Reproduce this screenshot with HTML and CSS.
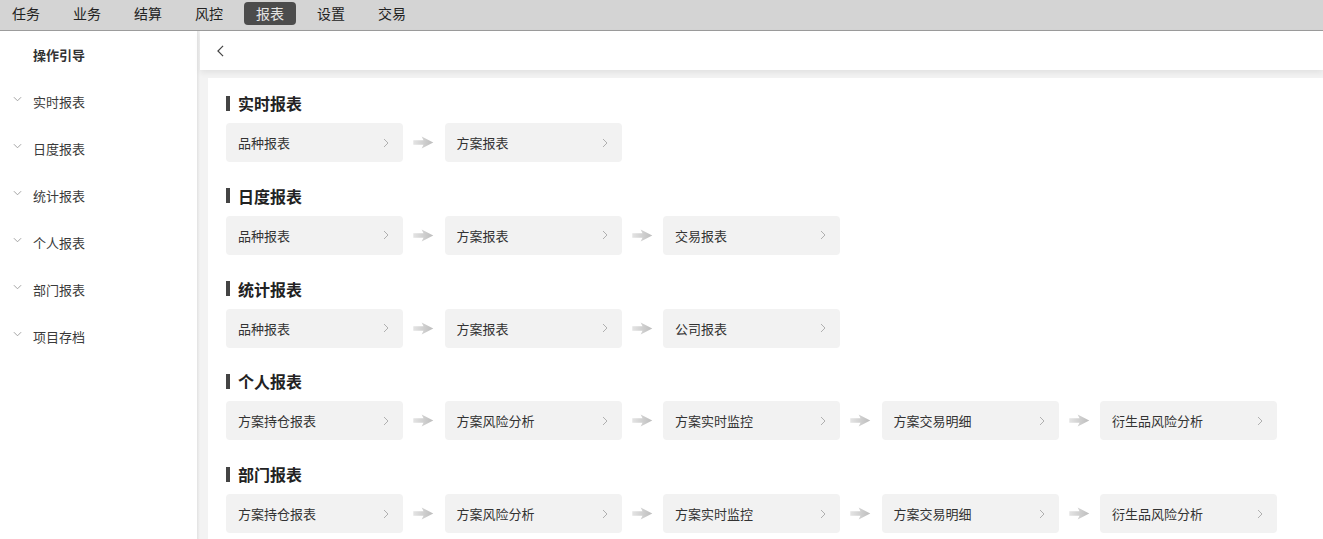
FILE: index.html
```html
<!DOCTYPE html>
<html lang="zh">
<head>
<meta charset="utf-8">
<title>报表</title>
<link rel="stylesheet" href="styles.css">
</head>
<body>
<svg width="0" height="0" class="defs" aria-hidden="true">
  <defs>
    <linearGradient id="ag" x1="0" y1="0" x2="1" y2="0">
      <stop offset="0" stop-color="#e4e4e4"/>
      <stop offset="1" stop-color="#bdbdbd"/>
    </linearGradient>
  </defs>
</svg>
<div class="topbar">
  <span class="nav-item">任务</span>
  <span class="nav-item">业务</span>
  <span class="nav-item">结算</span>
  <span class="nav-item">风控</span>
  <span class="nav-item active">报表</span>
  <span class="nav-item">设置</span>
  <span class="nav-item">交易</span>
</div>
<div class="layout">
  <aside class="sidebar">
    <div class="side-head">操作引导</div>
    <div class="side-item"><svg class="down" viewBox="0 0 10 6"><polyline points="1,1 5,5 9,1"/></svg><span>实时报表</span></div>
    <div class="side-item"><svg class="down" viewBox="0 0 10 6"><polyline points="1,1 5,5 9,1"/></svg><span>日度报表</span></div>
    <div class="side-item"><svg class="down" viewBox="0 0 10 6"><polyline points="1,1 5,5 9,1"/></svg><span>统计报表</span></div>
    <div class="side-item"><svg class="down" viewBox="0 0 10 6"><polyline points="1,1 5,5 9,1"/></svg><span>个人报表</span></div>
    <div class="side-item"><svg class="down" viewBox="0 0 10 6"><polyline points="1,1 5,5 9,1"/></svg><span>部门报表</span></div>
    <div class="side-item"><svg class="down" viewBox="0 0 10 6"><polyline points="1,1 5,5 9,1"/></svg><span>项目存档</span></div>
  </aside>
  <main class="main">
    <div class="header"><svg class="back" viewBox="0 0 8 14"><polyline points="7,1 1,7 7,13"/></svg></div>
    <div class="card">
      <section class="section">
        <h2 class="title">实时报表</h2>
        <div class="flow">
          <div class="box"><span>品种报表</span><svg class="chev" viewBox="0 0 6 10"><polyline points="1,1 5,5 1,9"/></svg></div>
          <svg class="arrow" viewBox="0 0 22 14"><path d="M0 4.5 H11 L9 0.5 L21.5 7 L9 13.5 L11 9.5 H0 Z"/></svg>
          <div class="box"><span>方案报表</span><svg class="chev" viewBox="0 0 6 10"><polyline points="1,1 5,5 1,9"/></svg></div>
        </div>
      </section>
      <section class="section">
        <h2 class="title">日度报表</h2>
        <div class="flow">
          <div class="box"><span>品种报表</span><svg class="chev" viewBox="0 0 6 10"><polyline points="1,1 5,5 1,9"/></svg></div>
          <svg class="arrow" viewBox="0 0 22 14"><path d="M0 4.5 H11 L9 0.5 L21.5 7 L9 13.5 L11 9.5 H0 Z"/></svg>
          <div class="box"><span>方案报表</span><svg class="chev" viewBox="0 0 6 10"><polyline points="1,1 5,5 1,9"/></svg></div>
          <svg class="arrow" viewBox="0 0 22 14"><path d="M0 4.5 H11 L9 0.5 L21.5 7 L9 13.5 L11 9.5 H0 Z"/></svg>
          <div class="box"><span>交易报表</span><svg class="chev" viewBox="0 0 6 10"><polyline points="1,1 5,5 1,9"/></svg></div>
        </div>
      </section>
      <section class="section">
        <h2 class="title">统计报表</h2>
        <div class="flow">
          <div class="box"><span>品种报表</span><svg class="chev" viewBox="0 0 6 10"><polyline points="1,1 5,5 1,9"/></svg></div>
          <svg class="arrow" viewBox="0 0 22 14"><path d="M0 4.5 H11 L9 0.5 L21.5 7 L9 13.5 L11 9.5 H0 Z"/></svg>
          <div class="box"><span>方案报表</span><svg class="chev" viewBox="0 0 6 10"><polyline points="1,1 5,5 1,9"/></svg></div>
          <svg class="arrow" viewBox="0 0 22 14"><path d="M0 4.5 H11 L9 0.5 L21.5 7 L9 13.5 L11 9.5 H0 Z"/></svg>
          <div class="box"><span>公司报表</span><svg class="chev" viewBox="0 0 6 10"><polyline points="1,1 5,5 1,9"/></svg></div>
        </div>
      </section>
      <section class="section">
        <h2 class="title">个人报表</h2>
        <div class="flow">
          <div class="box"><span>方案持仓报表</span><svg class="chev" viewBox="0 0 6 10"><polyline points="1,1 5,5 1,9"/></svg></div>
          <svg class="arrow" viewBox="0 0 22 14"><path d="M0 4.5 H11 L9 0.5 L21.5 7 L9 13.5 L11 9.5 H0 Z"/></svg>
          <div class="box"><span>方案风险分析</span><svg class="chev" viewBox="0 0 6 10"><polyline points="1,1 5,5 1,9"/></svg></div>
          <svg class="arrow" viewBox="0 0 22 14"><path d="M0 4.5 H11 L9 0.5 L21.5 7 L9 13.5 L11 9.5 H0 Z"/></svg>
          <div class="box"><span>方案实时监控</span><svg class="chev" viewBox="0 0 6 10"><polyline points="1,1 5,5 1,9"/></svg></div>
          <svg class="arrow" viewBox="0 0 22 14"><path d="M0 4.5 H11 L9 0.5 L21.5 7 L9 13.5 L11 9.5 H0 Z"/></svg>
          <div class="box"><span>方案交易明细</span><svg class="chev" viewBox="0 0 6 10"><polyline points="1,1 5,5 1,9"/></svg></div>
          <svg class="arrow" viewBox="0 0 22 14"><path d="M0 4.5 H11 L9 0.5 L21.5 7 L9 13.5 L11 9.5 H0 Z"/></svg>
          <div class="box"><span>衍生品风险分析</span><svg class="chev" viewBox="0 0 6 10"><polyline points="1,1 5,5 1,9"/></svg></div>
        </div>
      </section>
      <section class="section">
        <h2 class="title">部门报表</h2>
        <div class="flow">
          <div class="box"><span>方案持仓报表</span><svg class="chev" viewBox="0 0 6 10"><polyline points="1,1 5,5 1,9"/></svg></div>
          <svg class="arrow" viewBox="0 0 22 14"><path d="M0 4.5 H11 L9 0.5 L21.5 7 L9 13.5 L11 9.5 H0 Z"/></svg>
          <div class="box"><span>方案风险分析</span><svg class="chev" viewBox="0 0 6 10"><polyline points="1,1 5,5 1,9"/></svg></div>
          <svg class="arrow" viewBox="0 0 22 14"><path d="M0 4.5 H11 L9 0.5 L21.5 7 L9 13.5 L11 9.5 H0 Z"/></svg>
          <div class="box"><span>方案实时监控</span><svg class="chev" viewBox="0 0 6 10"><polyline points="1,1 5,5 1,9"/></svg></div>
          <svg class="arrow" viewBox="0 0 22 14"><path d="M0 4.5 H11 L9 0.5 L21.5 7 L9 13.5 L11 9.5 H0 Z"/></svg>
          <div class="box"><span>方案交易明细</span><svg class="chev" viewBox="0 0 6 10"><polyline points="1,1 5,5 1,9"/></svg></div>
          <svg class="arrow" viewBox="0 0 22 14"><path d="M0 4.5 H11 L9 0.5 L21.5 7 L9 13.5 L11 9.5 H0 Z"/></svg>
          <div class="box"><span>衍生品风险分析</span><svg class="chev" viewBox="0 0 6 10"><polyline points="1,1 5,5 1,9"/></svg></div>
        </div>
      </section>
    </div>
  </main>
</div>
</body>
</html>
```
FILE: styles.css
```css
* { box-sizing: border-box; }
html, body { margin: 0; height: 100%; }
body {
  font-family: "Noto Sans CJK SC", "Noto Sans", sans-serif;
  color: #333;
  background: #fff;
  overflow: hidden;
  width: 1323px;
  height: 539px;
}
.defs { position: absolute; width: 0; height: 0; }
.topbar {
  height: 31px;
  background: #d4d4d4;
  border-bottom: 1px solid #9c9c9c;
  display: flex;
  align-items: flex-start;
  gap: 9px;
  padding-top: 2px;
}
.nav-item {
  font-size: 14px;
  height: 23px;
  line-height: 23px;
  padding: 0 12px;
  color: #222;
  border-radius: 4px;
}
.nav-item.active {
  background: #4c4c4c;
  color: #e6e6e6;
}
.layout {
  display: flex;
  height: calc(100% - 31px);
}
.sidebar {
  width: 197px;
  flex: none;
  background: #fff;
}
.side-head {
  height: 47px;
  line-height: 47px;
  padding-left: 33px;
  font-size: 13px;
  font-weight: bold;
  color: #333;
}
.side-item {
  height: 47px;
  display: flex;
  align-items: center;
  padding-left: 13px;
  font-size: 13px;
  color: #3a3a3a;
}
.side-item .down {
  width: 9px;
  height: 6px;
  margin-right: 11px;
  margin-top: -5px;
  fill: none;
  stroke: #999;
  stroke-width: 1;
}
.main {
  flex: 1;
  background: linear-gradient(to right, #e2e2e2 0, #f3f3f3 3px, #f3f3f3 100%);
  padding-left: 3px;
  display: flex;
  flex-direction: column;
  min-height: 0;
}
.header {
  flex: none;
  height: 39px;
  background: #fff;
  display: flex;
  align-items: center;
  padding-left: 17px;
  box-shadow: 0 3px 6px rgba(0,0,0,0.07);
}
.back {
  width: 7px;
  height: 12px;
  fill: none;
  stroke: #444;
  stroke-width: 1.4;
}
.card {
  flex: 1;
  min-height: 0;
  overflow: hidden;
  background: #fff;
  margin: 8px 0 0 8px;
  padding: 15px 18px 0;
}
.section { margin-bottom: 23.75px; }
.title {
  margin: 0 0 10px;
  height: 20px;
  line-height: 20px;
  font-size: 16px;
  font-weight: bold;
  color: #222;
  display: flex;
  align-items: center;
}
.title::before {
  content: "";
  width: 4px;
  height: 15px;
  background: #444;
  margin-right: 8px;
}
.flow {
  display: flex;
  align-items: center;
}
.box {
  flex: none;
  width: 177px;
  height: 39px;
  background: #f2f2f2;
  border-radius: 4px;
  display: flex;
  align-items: center;
  justify-content: space-between;
  padding: 0 14px 0 12px;
  font-size: 13px;
  color: #333;
}
.chev {
  width: 6px;
  height: 10px;
  fill: none;
  stroke: #b0b0b0;
  stroke-width: 1;
}
.arrow {
  flex: none;
  width: 21px;
  height: 13px;
  margin: 0 10.25px;
  fill: url(#ag);
}
```
